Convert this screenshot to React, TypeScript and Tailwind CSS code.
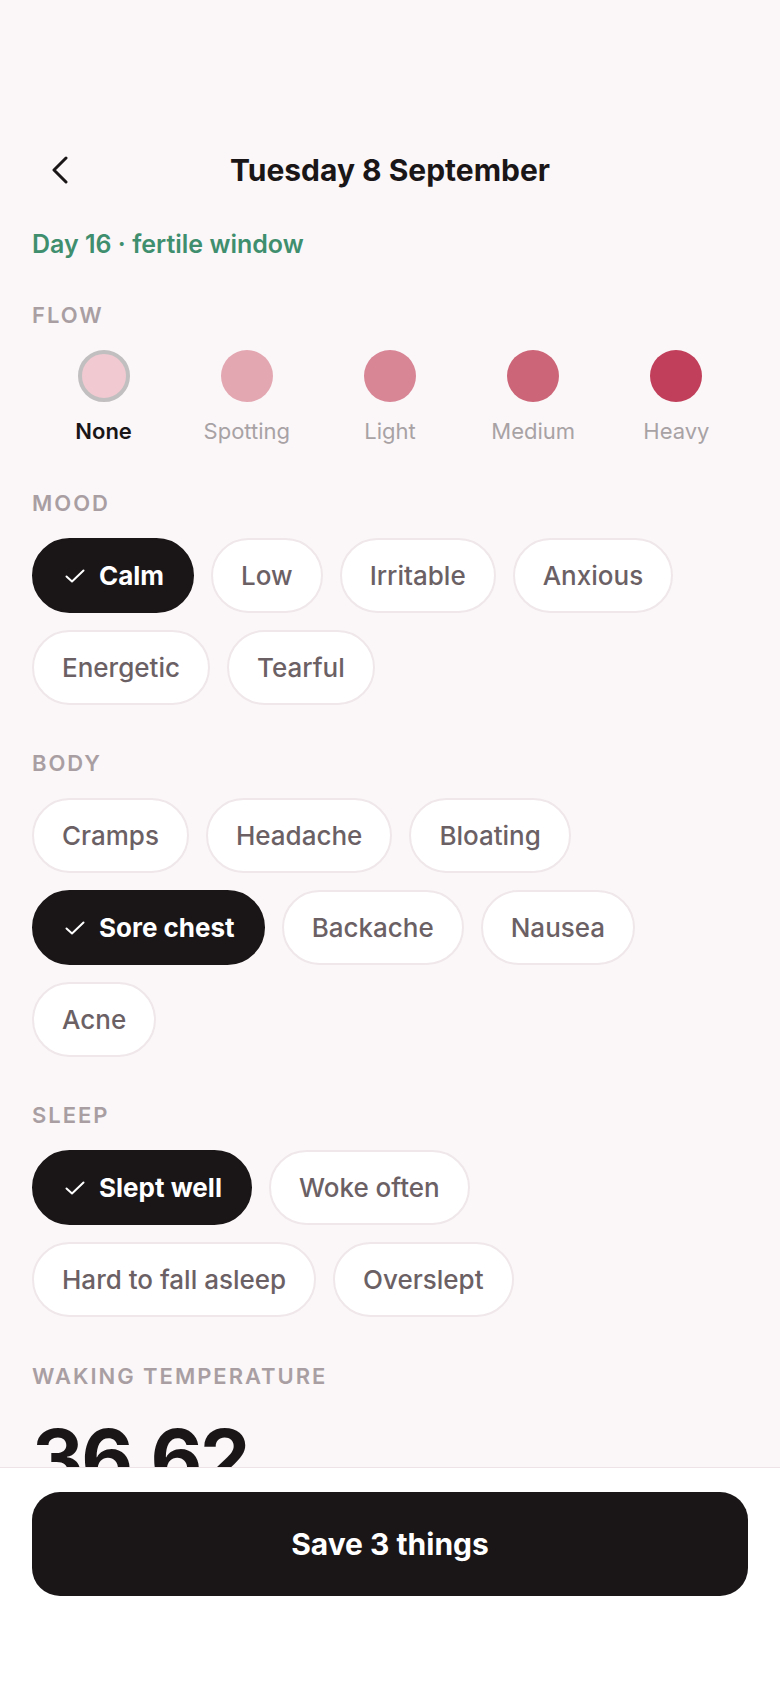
const flows = [
  { label: "None", color: "bg-[#f0c9d1]", active: true },
  { label: "Spotting", color: "bg-[#e3a7b2]", active: false },
  { label: "Light", color: "bg-[#d88596]", active: false },
  { label: "Medium", color: "bg-[#cc6577]", active: false },
  { label: "Heavy", color: "bg-[#c13f5a]", active: false },
];

const mood = ["Calm", "Low", "Irritable", "Anxious", "Energetic", "Tearful"];
const body = ["Cramps", "Headache", "Bloating", "Sore chest", "Backache", "Nausea", "Acne"];
const sleep = ["Slept well", "Woke often", "Hard to fall asleep", "Overslept"];

const picked = ["Calm", "Sore chest", "Slept well"];

function Check() {
  return (
    <svg width="20" height="14" viewBox="0 0 20 14" fill="none" className="shrink-0">
      <polyline
        points="1.5,7.5 7,12.5 18.5,1.5"
        stroke="white"
        strokeWidth="2"
        strokeLinecap="round"
        strokeLinejoin="round"
      />
    </svg>
  );
}

function Chip({ label }: { label: string }) {
  const on = picked.includes(label);
  if (on) {
    return (
      <button className="h-[75px] rounded-full bg-[#1a1618] border-2 border-[#1a1618] pl-[31px] pr-[28px] flex items-center gap-[14px] text-white font-bold text-[26px]">
        <Check />
        <span>{label}</span>
      </button>
    );
  }
  return (
    <button className="h-[75px] rounded-full bg-white border-2 border-[#efe7e9] px-[28px] flex items-center text-[#6b6165] font-medium text-[26px]">
      {label}
    </button>
  );
}

function Label({ children }: { children: string }) {
  return (
    <h3 className="text-[22px] leading-[28px] font-semibold tracking-[0.09em] text-[#a99fa3] uppercase">
      {children}
    </h3>
  );
}

function ChipGroup({ title, items }: { title: string; items: string[] }) {
  return (
    <section className="mt-[44px]">
      <Label>{title}</Label>
      <div className="mt-[21px] flex flex-wrap gap-x-[17px] gap-y-[17px]">
        {items.map((i) => (
          <Chip key={i} label={i} />
        ))}
      </div>
    </section>
  );
}

export default function App() {
  return (
    <div
      className="h-[1688px] w-full flex flex-col bg-[#fbf7f8] text-[#1a1618]"
      style={{ fontFamily: "Inter, 'Noto Sans', sans-serif" }}
    >
      <div className="flex-1 overflow-hidden px-8 pt-[142px]">
        <header className="relative h-14 flex items-center justify-center">
          <button className="absolute left-[18px] top-1/2 -translate-y-1/2">
            <svg width="20" height="28" viewBox="0 0 20 28" fill="none">
              <polyline
                points="16,2 4,14 16,26"
                stroke="#1a1618"
                strokeWidth="3"
                strokeLinecap="round"
                strokeLinejoin="round"
              />
            </svg>
          </button>
          <h1 className="text-[30px] leading-[36px] font-bold">Tuesday 8 September</h1>
        </header>

        <p className="mt-[30px] text-[25px] leading-[32px] font-semibold text-[#3f8f6e]">
          Day 16 · fertile window
        </p>

        <section className="mt-[41px]">
          <Label>Flow</Label>
          <div className="mt-[21px] grid grid-cols-5">
            {flows.map((f) => (
              <div key={f.label} className="flex flex-col items-center">
                <div
                  className={`w-[52px] h-[52px] rounded-full ${f.color} ${
                    f.active ? "border-4 border-[#c2bfc0]" : ""
                  }`}
                />
                <span
                  className={`mt-[15px] text-[22px] leading-[28px] ${
                    f.active ? "font-semibold text-[#1a1618]" : "text-[#a8a2a5]"
                  }`}
                >
                  {f.label}
                </span>
              </div>
            ))}
          </div>
        </section>

        <ChipGroup title="Mood" items={mood} />
        <ChipGroup title="Body" items={body} />
        <ChipGroup title="Sleep" items={sleep} />

        <section className="mt-[45px]">
          <Label>Waking temperature</Label>
          <div className="mt-[28px] text-[80px] leading-none font-bold tracking-[-0.03em]">36.62</div>
        </section>
      </div>

      <div className="shrink-0 bg-white border-t border-[#eee4e7] px-8 pt-[24px] pb-[92px]">
        <button className="w-full h-[104px] rounded-[28px] bg-[#1a1618] text-white text-[30px] font-bold">
          Save 3 things
        </button>
      </div>
    </div>
  );
}
